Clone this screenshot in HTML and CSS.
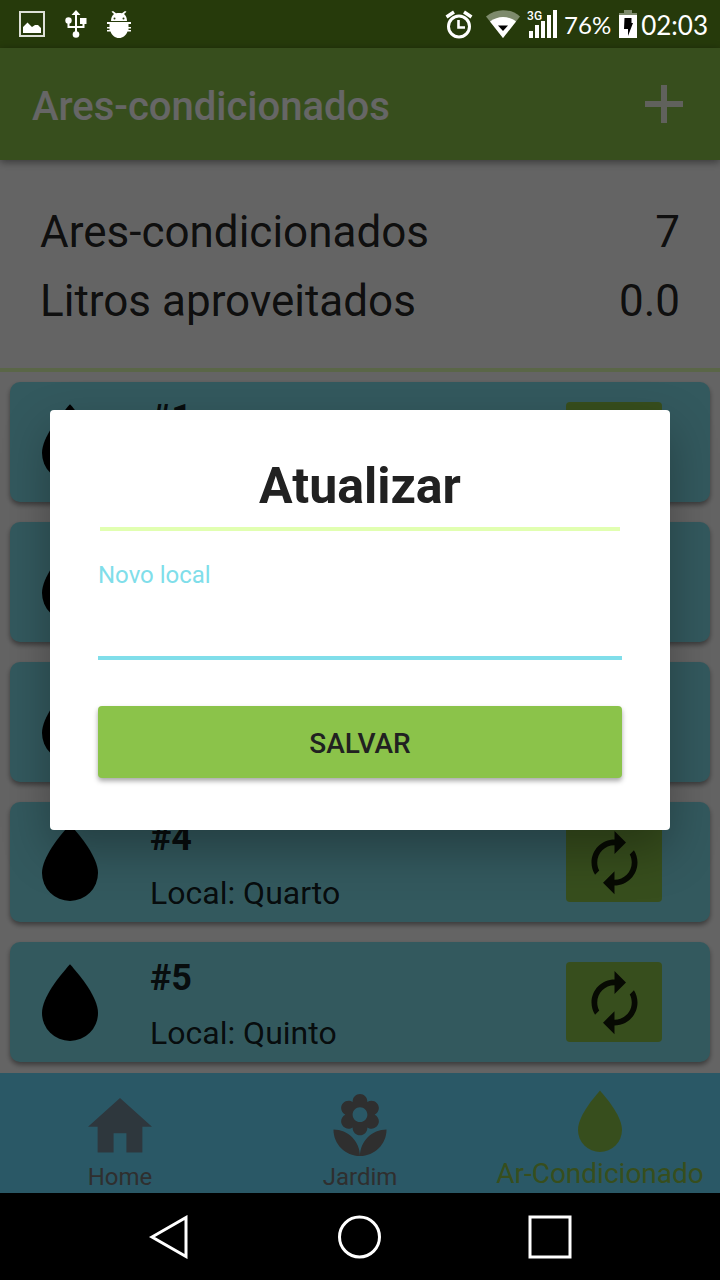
FILE: index.html
```html
<!DOCTYPE html>
<html lang="pt-BR">
<head>
<meta charset="utf-8">
<meta name="viewport" content="width=device-width, initial-scale=1">
<title>Ares-condicionados</title>
<link rel="stylesheet" href="styles.css">
</head>
<body>
<svg class="sprites" aria-hidden="true">
  <symbol id="drop" viewBox="6 3.25 12 16.75" preserveAspectRatio="none"><path d="M12 3.500C9.700 6.100 6 10.600 6 14a6 6 0 0 0 12 0C18 10.600 14.300 6.100 12 3.500Z"/></symbol>
  <symbol id="renew" viewBox="0 0 24 24"><path d="M12 6v3l4-4-4-4v3c-4.42 0-8 3.58-8 8 0 1.57.46 3.03 1.24 4.26L6.7 14.8c-.45-.83-.7-1.79-.7-2.8 0-3.31 2.69-6 6-6zm6.76 1.74L17.3 9.2c.44.84.7 1.79.7 2.8 0 3.31-2.69 6-6 6v-3l-4 4 4 4v-3c4.42 0 8-3.58 8-8 0-1.57-.46-3.03-1.24-4.26z"/></symbol>
</svg>

<div class="status">
  <div class="status-left">
    <svg width="26" height="26" viewBox="0 0 26 26"><path d="M1 1h24v24H1z" fill="none" stroke="#dde0d8" stroke-width="2"/><path d="M4 22v-6l4.500-4.500L13 16l3-2h3l3 3v5z" fill="#fff"/></svg>
    <svg width="22" height="28" viewBox="0 0 22 28" fill="#fff"><path d="M10 4h2v20h-2zM11 0l4.500 5H6.500z"/><circle cx="11" cy="24.500" r="3.300"/><circle cx="3.500" cy="10.500" r="3.200"/><path d="M15 8h6.500v6H15z"/><path d="M3.500 12v5h15v-5" fill="none" stroke="#fff" stroke-width="2"/></svg>
    <svg width="24" height="27" viewBox="0 0 24 27" fill="#fff"><path d="M4 10c0-3.500 1.200-5.500 3-7L4.500.8 6 0l3 2.300c2-.5 4-.5 6 0L18 0l1.500.8L17 3c1.800 1.500 3 3.500 3 7z"/><path d="M0 11h24v2h-2.500v3H24v1.500h-2.500V19H24v1.500h-3.500C19 24.500 16 27 12 27s-7-2.500-8.500-6.500H0V19h2.500v-1.500H0V16h2.500v-3H0z"/><g fill="#263a0b"><circle cx="7.500" cy="7.500" r="1"/><circle cx="16.500" cy="7.500" r="1"/></g></svg>
  </div>
  <div class="status-right">
    <svg class="alarm" width="28" height="29" viewBox="0 0 28 29" fill="none" stroke="#fff"><circle cx="14" cy="16.500" r="10.500" stroke-width="3"/><path d="M13.500 10v7.500H20" stroke-width="2.600"/><path d="M1.500 7L9 2M26.500 7L19 2" stroke-width="3.400"/></svg>
    <svg class="wifi" width="34" height="28" viewBox="0 0 34 28"><path d="M0 6.500C10-2 24-2 34 6.500L17 28z" fill="#7d8a6c"/><path d="M4 11.500C12 5.500 22 5.500 30 11.500L17 28z" fill="#fff"/><path d="M12 15.500h10L17 21z" fill="#000"/></svg>
    <div class="signal"><span class="network">3G</span><svg width="30" height="28" viewBox="0 0 30 28" fill="#fff"><path d="M2 21h4v7H2zM8 15h4v13H8zM14 11h4v17h-4zM20 5h4v23h-4zM26 0h4v28h-4z"/></svg></div>
    <span class="percent">76%</span>
    <svg class="battery" width="18" height="28" viewBox="0 0 18 28"><path d="M5 0h8v3h5v2H0V3h5z" fill="#7d8a6c"/><path d="M0 5h18v23H0z" fill="#fff"/><path d="M5.500 8h7v5H14L9 26v-7H5z" fill="#000"/></svg>
    <time class="clock">02:03</time>
  </div>
</div>

<div class="app">
  <header class="appbar">
    <h1 class="appbar-title">Ares-condicionados</h1>
    <button class="add" type="button" aria-label="Adicionar"><svg width="38" height="38" viewBox="0 0 38 38"><path d="M16 0h6v16h16v6H22v16h-6V22H0v-6h16z"/></svg></button>
  </header>
  <dl class="summary">
    <div class="summary-row"><dt>Ares-condicionados</dt><dd>7</dd></div>
    <div class="summary-row"><dt>Litros aproveitados</dt><dd>0.0</dd></div>
  </dl>
  <ul class="list">
    <li class="card"><svg class="card-drop"><use href="#drop"/></svg><div class="card-text"><h2 class="card-title">#1</h2></div><button class="renew" type="button" aria-label="Atualizar #1"><svg class="renew-icon"><use href="#renew"/></svg></button></li>
    <li class="card"><svg class="card-drop"><use href="#drop"/></svg><div class="card-text"></div><button class="renew" type="button" aria-label="Atualizar #2"><svg class="renew-icon"><use href="#renew"/></svg></button></li>
    <li class="card"><svg class="card-drop"><use href="#drop"/></svg><div class="card-text"></div><button class="renew" type="button" aria-label="Atualizar #3"><svg class="renew-icon"><use href="#renew"/></svg></button></li>
    <li class="card"><svg class="card-drop"><use href="#drop"/></svg><div class="card-text"><h2 class="card-title">#4</h2><p class="card-place">Local: Quarto</p></div><button class="renew" type="button" aria-label="Atualizar #4"><svg class="renew-icon"><use href="#renew"/></svg></button></li>
    <li class="card"><svg class="card-drop"><use href="#drop"/></svg><div class="card-text"><h2 class="card-title">#5</h2><p class="card-place">Local: Quinto</p></div><button class="renew" type="button" aria-label="Atualizar #5"><svg class="renew-icon"><use href="#renew"/></svg></button></li>
  </ul>
  <nav class="tabs">
    <a class="tab" href="#home"><svg class="tab-icon home-icon" viewBox="2 1.75 20 20"><path d="M10 20V14H14V20H19V12H22L12 3L2 12H5V20H10Z"/></svg>Home</a>
    <a class="tab" href="#jardim"><svg class="tab-icon" viewBox="1.15 0.98 21.7 21.7"><path d="M12 22c4.970 0 9-4.030 9-9-4.970 0-9 4.030-9 9zM5.600 10.250c0 1.380 1.120 2.500 2.500 2.500.53 0 1.010-.16 1.420-.44l-.02.19c0 1.380 1.120 2.500 2.500 2.500s2.500-1.120 2.500-2.500l-.02-.19c.4.28.89.44 1.420.44 1.380 0 2.500-1.120 2.500-2.500 0-1-.59-1.850-1.430-2.250.84-.4 1.430-1.250 1.430-2.250 0-1.380-1.120-2.500-2.500-2.500-.53 0-1.010.16-1.420.44l.02-.19C14.500 2.120 13.380 1 12 1S9.500 2.120 9.500 3.500l.02.19c-.4-.28-.89-.44-1.420-.44-1.380 0-2.500 1.120-2.500 2.500 0 1 .59 1.850 1.430 2.250-.84.4-1.430 1.250-1.430 2.250zM12 5.500c1.380 0 2.500 1.120 2.500 2.500s-1.120 2.500-2.500 2.500S9.500 9.380 9.500 8s1.120-2.500 2.500-2.500zM3 13c0 4.970 4.030 9 9 9 0-4.970-4.030-9-9-9z"/></svg>Jardim</a>
    <a class="tab tab-active" href="#ar"><svg class="tab-icon" viewBox="3.28 2.55 17.45 17.45"><path d="M12 3.250C9.700 5.900 6 10.500 6 14a6 6 0 0 0 12 0C18 10.500 14.300 5.900 12 3.250Z"/></svg>Ar-Condicionado</a>
  </nav>

  <div class="scrim">
    <form class="dialog" role="dialog" aria-labelledby="dialog-title">
      <h2 class="dialog-title" id="dialog-title">Atualizar</h2>
      <label class="field-label" for="local">Novo local</label>
      <input class="field" id="local" type="text">
      <button class="save" type="button">SALVAR</button>
    </form>
  </div>
</div>

<div class="system-nav">
  <button class="system-button" type="button" aria-label="Voltar"><svg width="44" height="44" viewBox="0 0 44 44"><path d="M4 22L38 2.500v39z"/></svg></button>
  <button class="system-button" type="button" aria-label="Início"><svg width="44" height="44" viewBox="0 0 44 44"><circle cx="21.500" cy="22" r="20"/></svg></button>
  <button class="system-button" type="button" aria-label="Recentes"><svg width="44" height="44" viewBox="0 0 44 44"><path d="M2 2h40v40H2z"/></svg></button>
</div>
</body>
</html>
```

FILE: styles.css
```css
* { box-sizing: border-box; }

body {
  margin: 0;
  min-height: 100vh;
  display: flex;
  flex-direction: column;
  background: #000;
  color: rgba(0, 0, 0, 0.87);
  font-family: Roboto, "Noto Sans", sans-serif;
}

h1, h2, p, dl, dd, ul { margin: 0; padding: 0; }
ul { list-style: none; }
svg { display: block; }
button { border: 0; padding: 0; font: inherit; color: inherit; }
.sprites { position: absolute; width: 0; height: 0; }

/* Status bar */
.status {
  height: 48px;
  padding: 0 12px 0 19px;
  display: flex;
  justify-content: space-between;
  align-items: center;
  background: #263a0b;
  color: #fff;
  font-family: Lato, sans-serif;
}
.status-left { display: flex; align-items: center; gap: 20px; }
.status-right { display: flex; align-items: center; }
.alarm { margin-right: 13px; }
.wifi { margin-right: 7px; }
.signal { position: relative; margin-right: 7px; }
.network {
  position: absolute;
  left: 0;
  top: 0;
  font: 500 12px/12px Roboto, sans-serif;
}
.percent { font-size: 24px; margin-right: 8px; }
.battery { margin-right: 4px; }
.clock { font-size: 26px; padding-top: 2px; }

/* Application */
.app {
  position: relative;
  flex: 1;
  display: flex;
  flex-direction: column;
  background: #fafafa;
}
.appbar {
  position: relative;
  height: 112px;
  padding: 0 37px 0 32px;
  display: flex;
  justify-content: space-between;
  align-items: center;
  background: #8bc34a;
  box-shadow: 0 2px 8px rgba(0, 0, 0, 0.45);
}
.appbar-title { padding-top: 6px; font-size: 40px; line-height: 48px; font-weight: 500; color: #fff; }
.add { background: none; }
.add svg { fill: #f0f2e6; }

.summary {
  padding: 46px 40px 41px;
  display: flex;
  flex-direction: column;
  gap: 17px;
  border-bottom: 4px solid #e1ffb1;
  font-size: 44px;
  line-height: 52px;
}
.summary-row { display: flex; justify-content: space-between; }

.list {
  flex: 1;
  padding: 10px;
  display: flex;
  flex-direction: column;
  gap: 20px;
}
.card {
  min-height: 120px;
  padding: 0 48px 0 32px;
  display: flex;
  align-items: center;
  border-radius: 10px;
  background: #80deea;
  box-shadow: 0 3px 5px rgba(0, 0, 0, 0.4);
}
.card-drop { width: 56px; height: 78px; margin-right: 52px; fill: #000; }
.card-text {
  flex: 1;
  align-self: stretch;
  display: flex;
  flex-direction: column;
  gap: 15px;
  padding-top: 15px;
}
.card-title { font-size: 36px; line-height: 42px; font-weight: 700; }
.card-place { font-size: 32px; line-height: 38px; }
.renew {
  width: 96px;
  height: 80px;
  display: grid;
  place-items: center;
  border-radius: 4px;
  background: #8bc34a;
}
.renew-icon { width: 69px; height: 69px; fill: rgba(0, 0, 0, 0.87); }

.tabs {
  height: 120px;
  display: grid;
  grid-template-columns: repeat(3, 1fr);
  background: #69dcff;
}
.tab {
  padding-bottom: 2px;
  display: flex;
  flex-direction: column;
  align-items: center;
  justify-content: flex-end;
  gap: 5px;
  color: #757575;
  font-size: 24px;
  line-height: 28px;
  text-decoration: none;
}
.tab-active { color: #8bc34a; font-size: 28px; line-height: 34px; }
.tab-icon { width: 64px; height: 64px; fill: currentColor; }
.home-icon { fill: #738a99; }

/* Dialog */
.scrim {
  position: absolute;
  inset: 0;
  padding: 0 50px 1px;
  display: flex;
  align-items: center;
  background: rgba(0, 0, 0, 0.6);
}
.dialog {
  flex: 1;
  padding: 47px 48px 52px;
  display: flex;
  flex-direction: column;
  border-radius: 4px;
  background: #fff;
  box-shadow: 0 20px 48px rgba(0, 0, 0, 0.3);
  color: #212121;
}
.dialog-title {
  margin: 0 2px 30px;
  padding-bottom: 12px;
  border-bottom: 4px solid #e1ffb1;
  font-size: 50px;
  line-height: 58px;
  font-weight: 700;
  text-align: center;
}
.field-label { font-size: 24px; line-height: 28px; color: #80deea; }
.field {
  width: 100%;
  height: 71px;
  padding: 0;
  border: 0;
  border-bottom: 4px solid #80deea;
  background: none;
  font: 36px/42px Roboto, sans-serif;
  color: inherit;
  outline: none;
}
.save {
  margin-top: 46px;
  height: 72px;
  padding-top: 2px;
  border-radius: 4px;
  background: #8bc34a;
  box-shadow: 0 3px 5px rgba(0, 0, 0, 0.35);
  font-size: 28px;
  font-weight: 500;
}

/* System navigation */
.system-nav {
  height: 87px;
  display: flex;
  justify-content: center;
  align-items: center;
  gap: 146px;
  background: #000;
}
.system-button { background: none; }
.system-button svg { fill: none; stroke: #fff; stroke-width: 3; }
```
